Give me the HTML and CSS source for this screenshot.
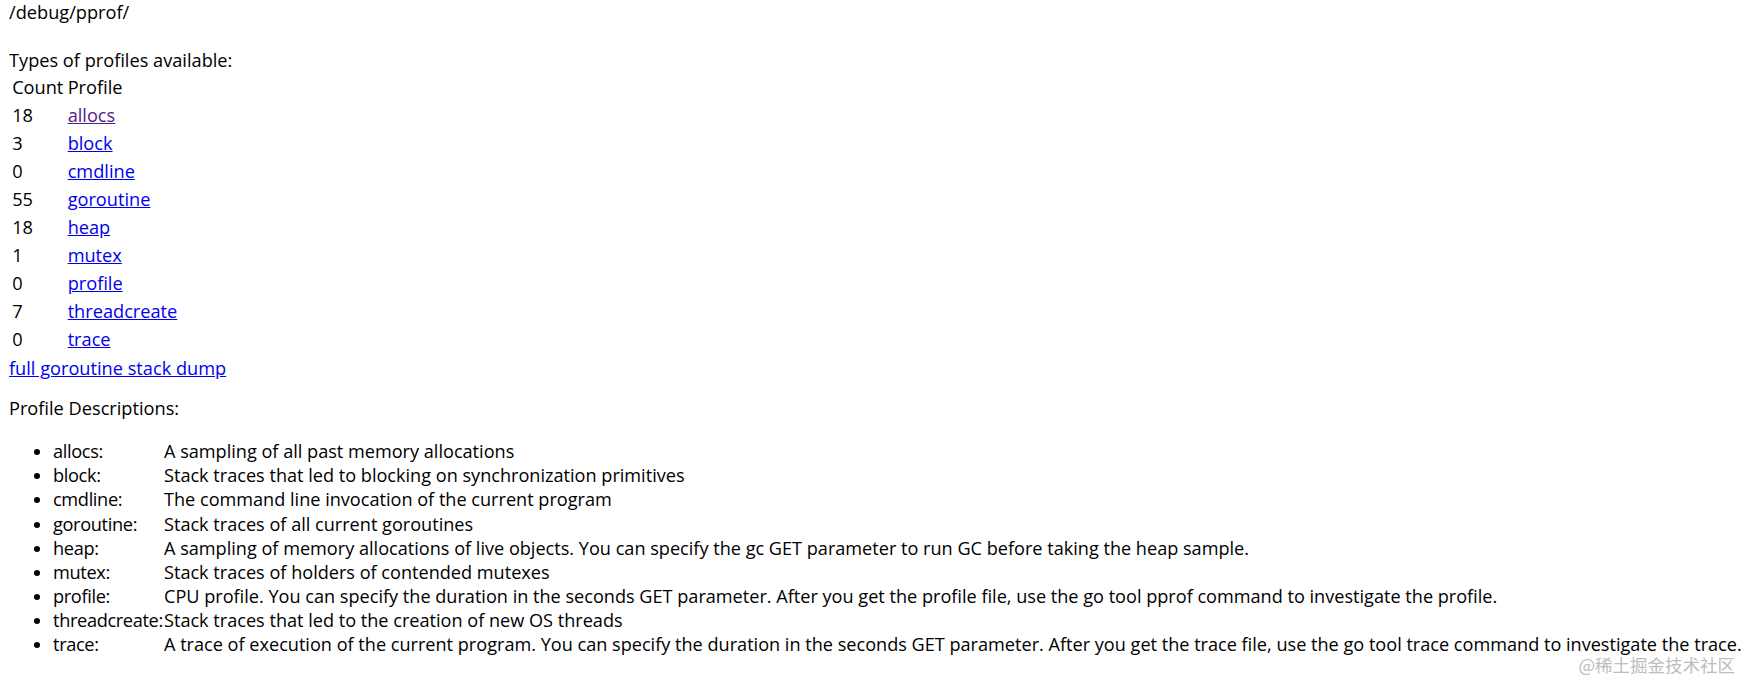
FILE: index.html
```html
<!DOCTYPE html>
<html>
<head>
<meta charset="utf-8">
<title>/debug/pprof/</title>
<link rel="stylesheet" href="styles.css">
</head>
<body>
<div class="line">/debug/pprof/</div>
<div class="line"></div>
<div class="line">Types of profiles available:</div>
<table class="profiles">
<thead><tr><td class="count">Count</td><td>Profile</td></tr></thead>
<tbody>
<tr><td class="count">18</td><td><a class="visited" href="#">allocs</a></td></tr>
<tr><td class="count">3</td><td><a href="#">block</a></td></tr>
<tr><td class="count">0</td><td><a href="#">cmdline</a></td></tr>
<tr><td class="count">55</td><td><a href="#">goroutine</a></td></tr>
<tr><td class="count">18</td><td><a href="#">heap</a></td></tr>
<tr><td class="count">1</td><td><a href="#">mutex</a></td></tr>
<tr><td class="count">0</td><td><a href="#">profile</a></td></tr>
<tr><td class="count">7</td><td><a href="#">threadcreate</a></td></tr>
<tr><td class="count">0</td><td><a href="#">trace</a></td></tr>
</tbody>
</table>
<div class="line dump"><a href="#">full goroutine stack dump</a></div>
<p class="desc-title">Profile Descriptions:</p>
<ul class="descs">
<li><span class="name">allocs:</span><span class="desc">A sampling of all past memory allocations</span></li>
<li><span class="name">block:</span><span class="desc">Stack traces that led to blocking on synchronization primitives</span></li>
<li><span class="name">cmdline:</span><span class="desc">The command line invocation of the current program</span></li>
<li><span class="name">goroutine:</span><span class="desc">Stack traces of all current goroutines</span></li>
<li><span class="name">heap:</span><span class="desc">A sampling of memory allocations of live objects. You can specify the gc GET parameter to run GC before taking the heap sample.</span></li>
<li><span class="name">mutex:</span><span class="desc">Stack traces of holders of contended mutexes</span></li>
<li><span class="name">profile:</span><span class="desc">CPU profile. You can specify the duration in the seconds GET parameter. After you get the profile file, use the go tool pprof command to investigate the profile.</span></li>
<li><span class="name">threadcreate:</span><span class="desc">Stack traces that led to the creation of new OS threads</span></li>
<li><span class="name">trace:</span><span class="desc">A trace of execution of the current program. You can specify the duration in the seconds GET parameter. After you get the trace file, use the go tool trace command to investigate the trace.</span></li>
</ul>
<div class="watermark">@稀土掘金技术社区</div>
</body>
</html>
```

FILE: styles.css
```css
html, body {
  background: #ffffff;
}
body {
  margin: 0 0 0 9px;
  font-family: "Open Sans", "Noto Sans CJK SC", sans-serif;
  font-size: 18.2px;
  line-height: 24px;
  color: #000000;
  position: relative;
  height: 681px;
  overflow: hidden;
}
a {
  color: #0000ee;
  text-decoration: underline;
}
a.visited {
  color: #551a8b;
}
.line {
  height: 24px;
  white-space: nowrap;
}
.profiles {
  border-collapse: separate;
  border-spacing: 2.4px;
  margin: 0;
}
.profiles td {
  padding: 1px 1.15px;
  line-height: 24px;
  vertical-align: top;
}
.profiles td.count {
  width: 51px;
}
.dump {
  margin-top: 2px;
}
.desc-title {
  margin: 16px 0 0 0;
}
.descs {
  margin: 19.3px 0 0 0;
  padding-left: 44px;
  list-style: disc;
}
.descs li {
  white-space: nowrap;
  line-height: 24.1px;
}
.name {
  display: inline-block;
  width: 111px;
  letter-spacing: -0.35px;
  white-space: nowrap;
}
.desc {
  font-size: 18.12px;
}
.watermark {
  position: absolute;
  right: 10px;
  top: 656px;
  font-family: "Noto Sans CJK SC", sans-serif;
  font-size: 17.5px;
  line-height: 17.5px;
  color: #bdbdbd;
}
```
